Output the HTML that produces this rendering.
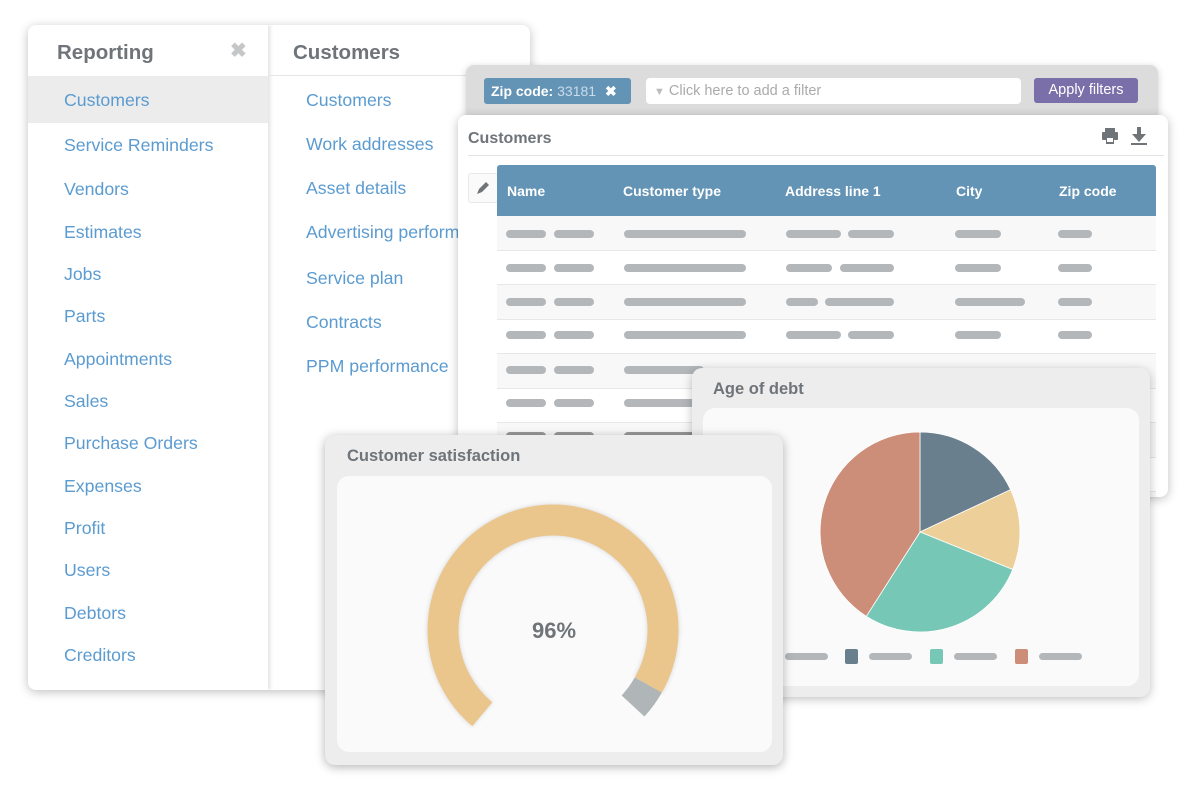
<!DOCTYPE html>
<html><head><meta charset="utf-8"><style>
*{margin:0;padding:0;box-sizing:border-box}
body{width:1200px;height:789px;background:#fff;position:relative;overflow:hidden;font-family:"Liberation Sans",sans-serif}
.abs{position:absolute}
.lnk{position:absolute;color:#5b9bd0;font-size:17.7px}
.bar{position:absolute;height:8px;border-radius:4px;background:#b3b7ba}
.th{position:absolute;top:18px;color:#fff;font-weight:bold;font-size:14px}
</style></head><body>
<!-- Reporting panel -->
<div class="abs" style="left:28px;top:25px;width:502px;height:665px;background:#fff;border-radius:8px;box-shadow:0 2px 10px rgba(0,0,0,.25);overflow:hidden">
  <div class="abs" style="left:0;top:0;width:240px;height:665px;background:#fff;box-shadow:2px 0 4px rgba(0,0,0,.12)"></div>
  <div class="abs" style="left:0;top:51px;width:240px;height:47px;background:#ececec"></div>
  <div class="abs" style="left:29px;top:16px;font-size:20.5px;font-weight:bold;color:#6f7479">Reporting</div>
  <div class="abs" style="left:202px;top:13px;font-size:20px;font-weight:bold;color:#c4c6c8">✖</div>
  <div class="abs" style="left:265px;top:16px;font-size:20.5px;font-weight:bold;color:#6f7479">Customers</div>
  <div class="abs" style="left:241px;top:50px;width:261px;height:1px;background:#e6e6e6"></div>
</div>
<div class="lnk" style="left:64px;top:90px">Customers</div>
<div class="lnk" style="left:64px;top:135px">Service Reminders</div>
<div class="lnk" style="left:64px;top:179px">Vendors</div>
<div class="lnk" style="left:64px;top:222px">Estimates</div>
<div class="lnk" style="left:64px;top:264px">Jobs</div>
<div class="lnk" style="left:64px;top:306px">Parts</div>
<div class="lnk" style="left:64px;top:349px">Appointments</div>
<div class="lnk" style="left:64px;top:391px">Sales</div>
<div class="lnk" style="left:64px;top:433px">Purchase Orders</div>
<div class="lnk" style="left:64px;top:476px">Expenses</div>
<div class="lnk" style="left:64px;top:518px">Profit</div>
<div class="lnk" style="left:64px;top:560px">Users</div>
<div class="lnk" style="left:64px;top:603px">Debtors</div>
<div class="lnk" style="left:64px;top:645px">Creditors</div>
<div class="lnk" style="left:306px;top:90px">Customers</div>
<div class="lnk" style="left:306px;top:134px">Work addresses</div>
<div class="lnk" style="left:306px;top:178px">Asset details</div>
<div class="lnk" style="left:306px;top:222px;width:155px;overflow:hidden;white-space:nowrap">Advertising performance</div>
<div class="lnk" style="left:306px;top:268px">Service plan</div>
<div class="lnk" style="left:306px;top:312px">Contracts</div>
<div class="lnk" style="left:306px;top:356px">PPM performance</div>

<!-- filter bar -->
<div class="abs" style="left:466px;top:65px;width:692px;height:60px;background:#dcdcdc;border-radius:8px;box-shadow:0 2px 8px rgba(0,0,0,.2)"></div>
<div class="abs" style="left:484px;top:78px;width:147px;height:26px;background:#6393b5;border-radius:3px;color:#fff;font-size:14px;line-height:26px;padding-left:7px"><b>Zip code:</b> <span style="color:#c9dcea">33181</span> <b style="margin-left:5px">✖</b></div>
<div class="abs" style="left:646px;top:78px;width:375px;height:26px;background:#fff;border-radius:4px;color:#aaa;font-size:14.5px;line-height:26px;padding-left:8px"><span style="font-size:11px;color:#bbb">▼</span> Click here to add a filter</div>
<div class="abs" style="left:1034px;top:78px;width:104px;height:25px;background:#7a6fa8;border-radius:3px;color:#fff;font-size:14.5px;line-height:24px;text-align:center">Apply filters</div>

<!-- customers table panel -->
<div class="abs" style="left:458px;top:115px;width:710px;height:382px;background:#fff;border-radius:8px;box-shadow:0 2px 10px rgba(0,0,0,.25);overflow:hidden">
  <div class="abs" style="left:10px;top:15px;font-size:16px;font-weight:bold;color:#6f7479">Customers</div>
  <div class="abs" style="left:643px;top:12px;width:18px;height:18px">
    <svg width="18" height="18" viewBox="0 0 18 18"><rect x="4" y="1" width="10" height="4" fill="#6f7479"/><rect x="1" y="5" width="16" height="8" rx="1" fill="#6f7479"/><rect x="5" y="10" width="8" height="7" fill="#6f7479"/><rect x="6" y="11" width="6" height="4" fill="#fff"/></svg></div>
  <div class="abs" style="left:672px;top:11px"><svg width="18" height="20" viewBox="0 0 18 20"><rect x="7" y="1" width="4" height="8" fill="#6f7479"/><path d="M2 8h14l-7 8z" fill="#6f7479"/><rect x="1" y="17" width="16" height="2" fill="#6f7479"/></svg></div>
  <div class="abs" style="left:10px;top:40px;width:696px;height:1px;background:#e3e3e3"></div>
  <div class="abs" style="left:10px;top:58px;width:30px;height:30px;border:1px solid #e8e8e8;border-radius:3px;background:#fafafa"><svg width="28" height="28" viewBox="0 0 28 28"><path d="M8 20l2-5 7-7 3 3-7 7z" fill="#6f7479"/></svg></div>
  <div class="abs" style="left:39px;top:50px;width:659px;height:51px;background:#6393b5;border-radius:3px 3px 0 0">
    <div class="th" style="left:10px">Name</div><div class="th" style="left:126px">Customer type</div><div class="th" style="left:288px">Address line 1</div><div class="th" style="left:459px">City</div><div class="th" style="left:562px">Zip code</div>
  </div>
  <div class="abs" style="left:39px;top:101px;width:659px;height:281px;background:
    repeating-linear-gradient(#f8f8f8 0,#f8f8f8 34px,#e7e7e7 34px,#e7e7e7 35px,#fff 35px,#fff 68px,#e7e7e7 68px,#e7e7e7 69px)"></div>
</div>
<!-- table bars -->
<div class="bar" style="left:506px;top:230px;width:40px"></div><div class="bar" style="left:554px;top:230px;width:40px"></div><div class="bar" style="left:624px;top:230px;width:122px"></div><div class="bar" style="left:786px;top:230px;width:55px"></div><div class="bar" style="left:848px;top:230px;width:46px"></div><div class="bar" style="left:955px;top:230px;width:46px"></div><div class="bar" style="left:1058px;top:230px;width:34px"></div>
<div class="bar" style="left:506px;top:264px;width:40px"></div><div class="bar" style="left:554px;top:264px;width:40px"></div><div class="bar" style="left:624px;top:264px;width:122px"></div><div class="bar" style="left:786px;top:264px;width:46px"></div><div class="bar" style="left:840px;top:264px;width:54px"></div><div class="bar" style="left:955px;top:264px;width:46px"></div><div class="bar" style="left:1058px;top:264px;width:34px"></div>
<div class="bar" style="left:506px;top:298px;width:40px"></div><div class="bar" style="left:554px;top:298px;width:40px"></div><div class="bar" style="left:624px;top:298px;width:122px"></div><div class="bar" style="left:786px;top:298px;width:32px"></div><div class="bar" style="left:825px;top:298px;width:69px"></div><div class="bar" style="left:955px;top:298px;width:70px"></div><div class="bar" style="left:1058px;top:298px;width:34px"></div>
<div class="bar" style="left:506px;top:331px;width:40px"></div><div class="bar" style="left:554px;top:331px;width:40px"></div><div class="bar" style="left:624px;top:331px;width:122px"></div><div class="bar" style="left:786px;top:331px;width:55px"></div><div class="bar" style="left:848px;top:331px;width:46px"></div><div class="bar" style="left:955px;top:331px;width:46px"></div><div class="bar" style="left:1058px;top:331px;width:34px"></div>
<div class="bar" style="left:506px;top:366px;width:40px"></div><div class="bar" style="left:554px;top:366px;width:40px"></div><div class="bar" style="left:624px;top:366px;width:80px"></div>
<div class="bar" style="left:506px;top:399px;width:40px"></div><div class="bar" style="left:554px;top:399px;width:40px"></div><div class="bar" style="left:624px;top:399px;width:80px"></div>
<div class="bar" style="left:506px;top:432px;width:40px;background:#999"></div><div class="bar" style="left:554px;top:432px;width:40px;background:#999"></div><div class="bar" style="left:624px;top:432px;width:80px;background:#999"></div>

<!-- Age of debt -->
<div class="abs" style="left:692px;top:368px;width:458px;height:329px;background:#ededed;border-radius:10px;box-shadow:0 2px 10px rgba(0,0,0,.25)">
  <div class="abs" style="left:21px;top:12px;font-size:16.5px;font-weight:bold;color:#6f7479">Age of debt</div>
  <div class="abs" style="left:11px;top:40px;width:436px;height:278px;background:#fafafa;border-radius:12px"></div>
</div>
<svg class="abs" style="left:0;top:0" width="1200" height="789">
  <g stroke="#fff" stroke-width="0.8">
  <path d="M920 532 L920 432 A100 100 0 0 1 1010.6 489.7 Z" fill="#6a7f8e"/>
  <path d="M920 532 L1010.6 489.7 A100 100 0 0 1 1012.7 569.5 Z" fill="#edcf9a"/>
  <path d="M920 532 L1012.7 569.5 A100 100 0 0 1 866.3 616.3 Z" fill="#76c7b6"/>
  <path d="M920 532 L866.3 616.3 A100 100 0 0 1 920 432 Z" fill="#cc8e78"/>
  </g>
  <rect x="785" y="653" width="43" height="7" rx="3.5" fill="#b3b7ba"/>
  <rect x="845" y="649" width="13" height="15" rx="2" fill="#6a7f8e"/>
  <rect x="869" y="653" width="43" height="7" rx="3.5" fill="#b3b7ba"/>
  <rect x="930" y="649" width="13" height="15" rx="2" fill="#76c7b6"/>
  <rect x="954" y="653" width="43" height="7" rx="3.5" fill="#b3b7ba"/>
  <rect x="1015" y="649" width="13" height="15" rx="2" fill="#cc8e78"/>
  <rect x="1039" y="653" width="43" height="7" rx="3.5" fill="#b3b7ba"/>
</svg>

<!-- Customer satisfaction -->
<div class="abs" style="left:325px;top:435px;width:458px;height:330px;background:#ededed;border-radius:10px;box-shadow:0 2px 10px rgba(0,0,0,.3)">
  <div class="abs" style="left:22px;top:12px;font-size:16.5px;font-weight:bold;color:#6f7479">Customer satisfaction</div>
  <div class="abs" style="left:12px;top:41px;width:435px;height:276px;background:#fafafa;border-radius:12px"></div>
  <div class="abs" style="left:0;top:183px;width:458px;text-align:center;font-size:22px;font-weight:bold;color:#6f7479;padding-left:0">96%</div>
</div>
<svg class="abs" style="left:0;top:0" width="1200" height="789">
  <defs><filter id="sh" x="-20%" y="-20%" width="140%" height="140%"><feGaussianBlur stdDeviation="2"/></filter></defs>
  <path d="M482.3 714.3 A110 110 0 1 1 648.3 685" fill="none" stroke="#bbb" stroke-width="32" filter="url(#sh)" opacity=".5"/>
  <path d="M482.3 714.3 A110 110 0 1 1 648.3 685" fill="none" stroke="#eac68d" stroke-width="31"/>
  <path d="M648.3 685 A110 110 0 0 1 633 706" fill="none" stroke="#b0b5b8" stroke-width="31"/>
</svg>
</body></html>
